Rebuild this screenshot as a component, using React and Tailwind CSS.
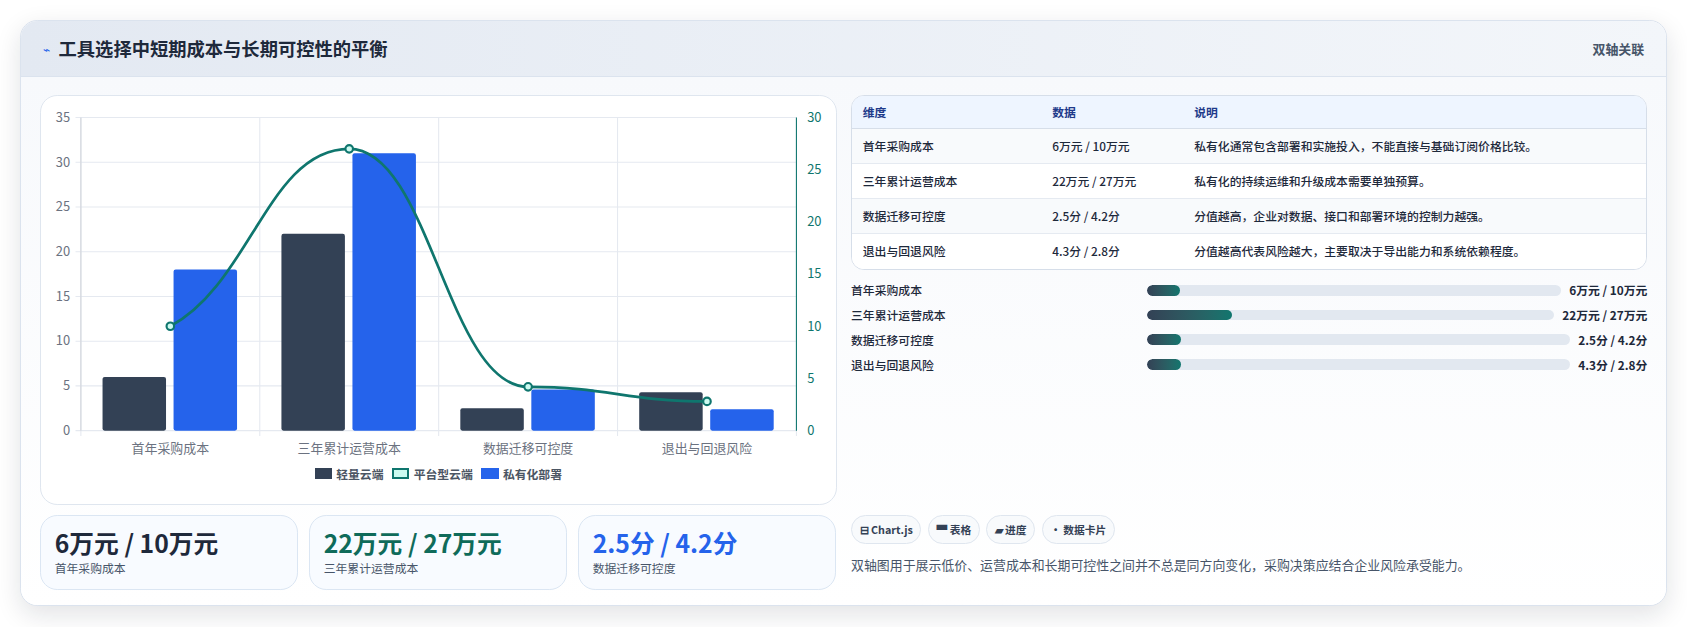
import React from "react";

const F = { fontFamily: '"Noto Sans CJK SC","Noto Sans",sans-serif' };
const cats = ["首年采购成本", "三年累计运营成本", "数据迁移可控度", "退出与回退风险"];
const dark = [6, 22, 2.5, 4.3];
const blue = [18, 31, 4.6, 2.4];
const line = [10, 27, 4.2, 2.8];

function Chart() {
  const x0 = 38, x1 = 703, y0 = 20, y1 = 311;
  const cw = (x1 - x0) / 4;
  const yl = (v) => y1 - (v / 35) * (y1 - y0);
  const yr = (v) => y1 - (v / 30) * (y1 - y0);
  const pts = line.map((v, i) => [x0 + cw * (i + 0.5), yr(v)]);
  let d = `M${pts[0][0]},${pts[0][1]}`;
  for (let i = 0; i < 3; i++) {
    const [ax, ay] = pts[i], [bx, by] = pts[i + 1];
    const dx = (bx - ax) * 0.45;
    d += ` C${ax + dx},${i === 0 ? ay - 40 : ay} ${bx - dx},${by} ${bx},${by}`;
  }
  return (
    <svg width="740" height="340" style={F}>
      {[0, 5, 10, 15, 20, 25, 30, 35].map((v) => (
        <g key={v}>
          <line x1={x0 - 5} x2={x1} y1={yl(v)} y2={yl(v)} stroke="#e5e9f0" />
          <text x={x0 - 10} y={yl(v) + 4} textAnchor="end" fontSize="12" fill="#6b7280">{v}</text>
        </g>
      ))}
      {[0, 5, 10, 15, 20, 25, 30].map((v) => (
        <text key={v} x={x1 + 10} y={yr(v) + 4} fontSize="12" fill="#0f766e">{v}</text>
      ))}
      {[0, 1, 2, 3, 4].map((i) => (
        <line key={i} x1={x0 + cw * i} x2={x0 + cw * i} y1={y0} y2={y1 + 5} stroke="#e5e9f0" />
      ))}
      <line x1={x0} x2={x0} y1={y0} y2={y1} stroke="#d1d5db" />
      <line x1={x1} x2={x1} y1={y0} y2={y1} stroke="#0f766e" />
      {cats.map((c, i) => {
        const cx = x0 + cw * (i + 0.5);
        return (
          <g key={c}>
            <rect x={cx - 63} y={yl(dark[i])} width="59" height={y1 - yl(dark[i])} fill="#334155" rx="2" />
            <rect x={cx + 3} y={yl(blue[i])} width="59" height={y1 - yl(blue[i])} fill="#2563eb" rx="2" />
            <text x={cx} y={y1 + 21} textAnchor="middle" fontSize="12" fill="#6b7280">{c}</text>
          </g>
        );
      })}
      <path d={d} fill="none" stroke="#0f766e" strokeWidth="2.5" />
      {pts.map(([x, y], i) => (
        <circle key={i} cx={x} cy={y} r="3.5" fill="#ccfbf1" stroke="#0f766e" strokeWidth="2" />
      ))}
    </svg>
  );
}

const rows = [
  ["首年采购成本", "6万元 / 10万元", "私有化通常包含部署和实施投入，不能直接与基础订阅价格比较。", 8, 6],
  ["三年累计运营成本", "22万元 / 27万元", "私有化的持续运维和升级成本需要单独预算。", 21, 3],
  ["数据迁移可控度", "2.5分 / 4.2分", "分值越高，企业对数据、接口和部署环境的控制力越强。", 8, 7],
  ["退出与回退风险", "4.3分 / 2.8分", "分值越高代表风险越大，主要取决于导出能力和系统依赖程度。", 8, 7],
];

export default function App() {
  return (
    <div className="w-[1687px] h-[627px] bg-white overflow-hidden">
      <div className="[zoom:1.076] w-[1568px] h-[582px] pt-[19px] pl-[19px]" style={F}>
        <div className="w-[1530px] h-[544px] rounded-2xl border border-[#dbe3ee] bg-white shadow-[0_8px_24px_rgba(15,23,42,0.12)] overflow-hidden">
          <div className="h-[52px] flex items-center justify-between px-[20px] bg-gradient-to-r from-[#e3e9f2] to-[#f3f6fa] border-b border-[#dbe3ee]">
            <div className="flex items-center gap-2">
              <span className="text-[#2563eb] text-[11px]">⌁</span>
              <span className="text-[17px] font-bold text-[#1e293b]">工具选择中短期成本与长期可控性的平衡</span>
            </div>
            <span className="text-[12px] font-semibold text-[#475569]">双轴关联</span>
          </div>
          <div className="flex gap-[13px] px-[17px] pt-[16px] bg-gradient-to-b from-[#f7f9fc] to-white h-[492px]">
            <div className="w-[741px] flex flex-col gap-[10px]">
              <div className="h-[381px] rounded-2xl border border-[#dfe6ef] bg-white flex flex-col items-center">
                <Chart />
                <div className="flex gap-[8px] text-[11px] text-[#4b5563] font-semibold mt-[3px]">
                  <span className="flex items-center gap-1"><i className="w-[16px] h-[11px] bg-[#334155] inline-block" />轻量云端</span>
                  <span className="flex items-center gap-1"><i className="w-[16px] h-[11px] bg-[#ccfbf1] border-2 border-[#0f766e] inline-block" />平台型云端</span>
                  <span className="flex items-center gap-1"><i className="w-[16px] h-[11px] bg-[#2563eb] inline-block" />私有化部署</span>
                </div>
              </div>
              <div className="flex gap-[10px]">
                {[["6万元 / 10万元", "首年采购成本", "text-[#1e293b]"], ["22万元 / 27万元", "三年累计运营成本", "text-[#0f6b5a]"], ["2.5分 / 4.2分", "数据迁移可控度", "text-[#2563eb]"]].map(([v, l, c]) => (
                  <div key={l} className="w-[240px] h-[69px] rounded-2xl border border-[#dbe6f3] bg-[#f8fbff] px-[13px] pt-[8px]">
                    <div className={`text-[23px] font-bold leading-[32px] ${c}`}>{v}</div>
                    <div className="text-[11px] text-[#475569]">{l}</div>
                  </div>
                ))}
              </div>
            </div>
            <div className="w-[741px] flex flex-col">
              <div className="rounded-xl border border-[#d6dee9] overflow-hidden text-[11px] text-[#1e293b] font-medium bg-white">
                <div className="flex h-[31px] items-center bg-[#eef5ff] text-[#1e3a8a] font-semibold border-b border-[#d6dee9]">
                  <div className="w-[186px] pl-[10px]">维度</div><div className="w-[132px]">数据</div><div>说明</div>
                </div>
                {rows.map((r, i) => (
                  <div key={i} className={`flex h-[32.5px] items-center ${i < 3 ? "border-b border-[#e5eaf1]" : ""} ${i % 2 === 0 ? "bg-[#f8fafc]" : "bg-white"}`}>
                    <div className="w-[186px] pl-[10px]">{r[0]}</div><div className="w-[132px]">{r[1]}</div><div>{r[2]}</div>
                  </div>
                ))}
              </div>
              <div className="flex flex-col gap-[7px] mt-[11px] text-[11px] text-[#1e293b] font-medium">
                {rows.map((r) => (
                  <div key={r[0]} className="flex items-center h-[16px]">
                    <div className="w-[275px]">{r[0]}</div>
                    <div className="flex-1 h-[10px] rounded-full bg-[#e2e8f0] overflow-hidden">
                      <div className="h-full rounded-full bg-gradient-to-r from-[#334155] to-[#0f766e]" style={{ width: `${r[3]}%` }} />
                    </div>
                    <div className="ml-[8px] font-bold text-right">{r[1]}</div>
                  </div>
                ))}
              </div>
              <div className="mt-auto mb-[30px]">
                <div className="flex gap-[6px] text-[10px] font-semibold text-[#334155]">
                  {["⊟ Chart.js", "▀ 表格", "▰ 进度", "• 数据卡片"].map((t) => (
                    <span key={t} className="h-[27px] px-[7px] flex items-center rounded-full border border-[#dfe6ef] bg-[#f8fafc]">{t}</span>
                  ))}
                </div>
                <div className="mt-[10px] text-[12px] text-[#475569]">双轴图用于展示低价、运营成本和长期可控性之间并不总是同方向变化，采购决策应结合企业风险承受能力。</div>
              </div>
            </div>
          </div>
        </div>
      </div>
    </div>
  );
}
